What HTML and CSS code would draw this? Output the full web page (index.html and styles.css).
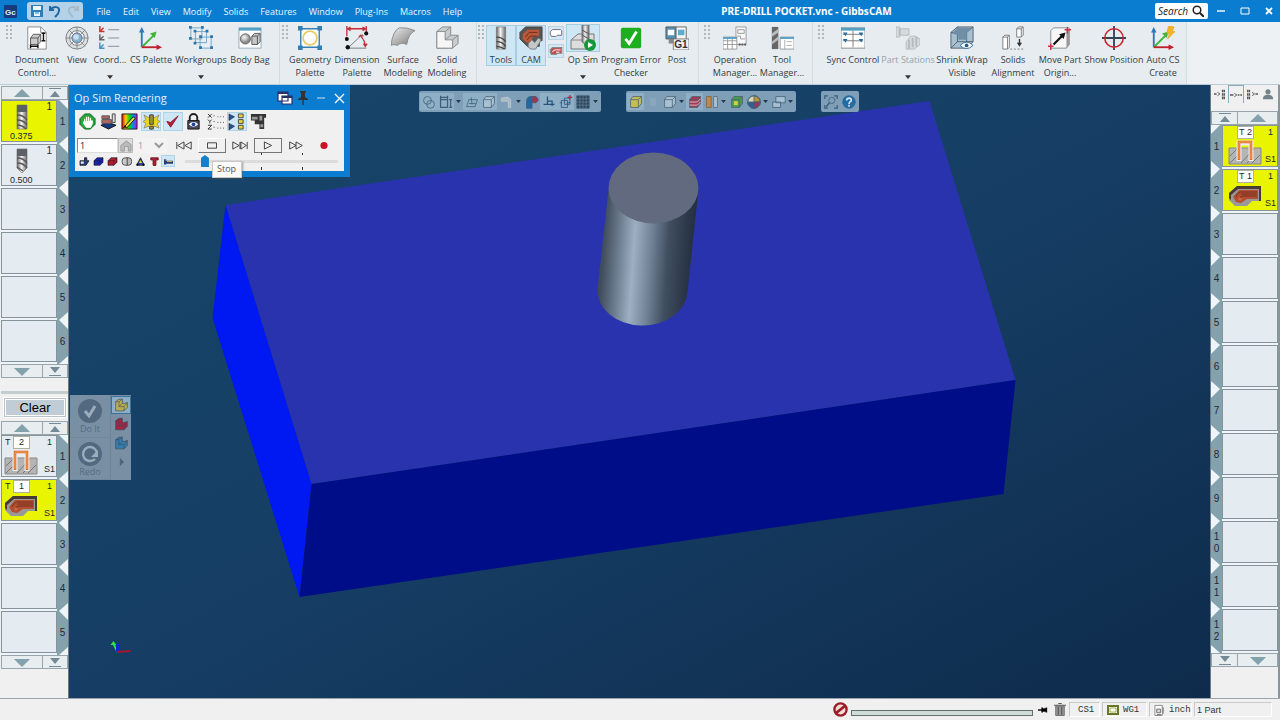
FILE: index.html
```html
<!DOCTYPE html>
<html lang="en">
<head>
<meta charset="utf-8">
<title>PRE-DRILL POCKET.vnc - GibbsCAM</title>
<link rel="stylesheet" href="styles.css">
</head>
<body>
<svg class="defs" aria-hidden="true">
  <defs>
    <linearGradient id="steel"><stop offset="0" stop-color="#666"/><stop offset=".45" stop-color="#f4f4f4"/><stop offset="1" stop-color="#666"/></linearGradient>
    <linearGradient id="grey" x2="1" y2="1"><stop offset="0" stop-color="#eee"/><stop offset="1" stop-color="#777"/></linearGradient>
    <radialGradient id="ball" cx=".4" cy=".35"><stop offset="0" stop-color="#fff"/><stop offset="1" stop-color="#888"/></radialGradient>
    <linearGradient id="rainbow"><stop offset="0" stop-color="#e00"/><stop offset=".25" stop-color="#fc0"/><stop offset=".5" stop-color="#0d0"/><stop offset=".75" stop-color="#08f"/><stop offset="1" stop-color="#d0d"/></linearGradient>
    <symbol id="mill" viewBox="0 0 12 26">
      <path d="M1 1h10v24H1z" fill="url(#steel)" stroke="#666" stroke-width=".6"/>
      <path d="M1 1h10v7H1z" fill="#5c6167"/>
      <path d="M1 11c4 0 8 2 10 5M1 16c4 0 8 2 10 5M1 21c3 0 6 1 9 4" fill="none" stroke="#555" stroke-width="1.3"/>
    </symbol>
    <symbol id="cutter" viewBox="0 0 12 26">
      <path d="M1 1h10v24H1z" fill="url(#steel)" stroke="#666" stroke-width=".6"/>
      <path d="M1 12c4 0 8 2 10 5M1 17c4 0 8 2 10 5M1 22c3 0 6 1 9 3" fill="none" stroke="#444" stroke-width="1.4"/>
    </symbol>
    <symbol id="drill" viewBox="0 0 12 26">
      <path d="M1 1h10v19l-5 5-5-5z" fill="url(#steel)" stroke="#666" stroke-width=".6"/>
      <path d="M1 1h10v7H1z" fill="#5c6167"/>
      <path d="M1 10c4 0 8 2 10 5M1 15c4 0 8 2 10 5M1 19l6 4" fill="none" stroke="#555" stroke-width="1.3"/>
    </symbol>
    <symbol id="contour" viewBox="0 0 34 26">
      <path d="M1 9h32v16H1z" fill="#b4b4b4" stroke="#888"/>
      <path d="m2 17 7-7M2 24 9 17M13 24 26 10M24 24l8-8M19 24l6-6" stroke="#777" fill="none"/>
      <path d="M11 22V4h12v18" fill="none" stroke="#eee" stroke-width="5"/>
      <path d="M11 21V3h12v18" fill="none" stroke="#e2682a" stroke-width="2.6"/>
      <path d="M11 20V3h12v17" fill="none" stroke="#f5b45b" stroke-width=".8"/>
    </symbol>
    <symbol id="pocket" viewBox="0 0 34 22">
      <path d="M9 1h24v15h-9l-5 5H7l-6-6V8z" fill="#999"/>
      <path d="M9 1h24v15h-2V4H10L3 10v5l-2-2V8z" fill="#4a3a31"/>
      <path d="M11 5h19v9H19l-6 4-5-1-3-5z" fill="#b54e30"/>
      <path d="M13 9h16M12 14a3 3 0 0 1 3-3h14M8 12q2-6 7-5h14" stroke="#72311f" fill="none"/>
      <circle cx="12" cy="14" r="1.6" fill="#d06a45"/>
    </symbol>
    <symbol id="up" viewBox="0 0 20 10"><path d="M10 0 19 9H1z"/></symbol>
    <symbol id="down" viewBox="0 0 20 10"><path d="M10 10 19 1H1z"/></symbol>
    <symbol id="top" viewBox="0 0 14 10"><path d="M1 0h12v1H1zM7 3l5 6H2z"/></symbol>
    <symbol id="bottom" viewBox="0 0 14 10"><path d="M1 9h12v1H1zM7 7l5-6H2z"/></symbol>
    <symbol id="axes" viewBox="0 0 26 26">
      <path d="M3 23V5" stroke="#2f78b7" stroke-width="2"/><path d="m0 7 3-6 3 6z" fill="#2f78b7"/>
      <path d="m3 23 14-14" stroke="#3fb53a" stroke-width="2"/><path d="m19 6-7 2 5 5z" fill="#3fb53a"/>
      <path d="M3 23h17" stroke="#c0202c" stroke-width="2"/><path d="m19 20 6 3-6 3z" fill="#c0202c"/>
    </symbol>
    <symbol id="block" viewBox="0 0 14 12"><path d="m1 5 4-4h8v6l-4 4H1z" fill="currentColor" stroke="#112" stroke-width=".8"/><path d="M1 5h8v6M9 5l4-4" fill="none" stroke="#112" stroke-width=".6"/></symbol>
    <symbol id="lsolid" viewBox="0 0 18 16"><path d="m2 4 4-3h4v5h3l3-1v6l-4 4H2z" fill="currentColor" stroke="#3c4b58" stroke-width=".8"/><path d="M2 4h4v6h6v5M6 4l4-3M6 10l4-4m2 4 4-5" fill="none" stroke="#3c4b58" stroke-width=".7"/></symbol>
    <symbol id="cube" viewBox="0 0 18 18"><path d="m2 6 3-4h11v9l-4 5H2z" fill="currentColor" stroke="#4c6171"/><path d="M2 6h10v10M12 6l4-4" fill="none" stroke="#4c6171"/></symbol>
    <symbol id="caret" viewBox="0 0 8 5"><path d="M0 0h8L4 5z"/></symbol>
    <symbol id="grip" viewBox="0 0 6 14"><path d="M0 1h2M4 1h2M0 5h2M4 5h2M0 9h2M4 9h2M0 13h2M4 13h2" stroke="#9aa5ac" stroke-width="1.4"/></symbol>
  </defs>
</svg>

<header class="titlebar">
  <div class="title-left">
    <svg class="logo" viewBox="0 0 13 13"><rect width="13" height="13" rx="1" fill="#173b7c"/><text x="1" y="10" class="logo-text">Gc</text></svg>
    <div class="quick">
      <button aria-label="Save"><svg viewBox="0 0 14 14"><path d="M1 1h12v12H1z" fill="#2980ba"/><path d="M3 2h8v4H3zM4 8h6v4H4z" fill="#eef6fa"/><path d="M5 9h4" stroke="#2980ba"/></svg></button>
      <button aria-label="Undo"><svg viewBox="0 0 14 14"><path d="M2 2v4h4M2 6c4-5 10-3 9 1-.3 3-2 4-4 6" fill="none" stroke="#2367a0" stroke-width="2"/></svg></button>
      <button aria-label="Redo"><svg viewBox="0 0 14 14"><path d="M12 2v4H8m4 0C8 1 2 3 3 7c.3 3 2 4 4 6" fill="none" stroke="#a5bac7" stroke-width="2"/></svg></button>
    </div>
    <nav class="menu">
      <button>File</button><button>Edit</button><button>View</button><button>Modify</button><button>Solids</button><button>Features</button><button>Window</button><button>Plug-Ins</button><button>Macros</button><button>Help</button>
    </nav>
  </div>
  <h1>PRE-DRILL POCKET.vnc - GibbsCAM</h1>
  <div class="title-right">
    <button class="search">Search <svg viewBox="0 0 12 12"><circle cx="5" cy="5" r="3.8" fill="none" stroke="#222" stroke-width="1.5"/><path d="m8 8 4 4" stroke="#222" stroke-width="2"/></svg></button>
    <button class="win" aria-label="Minimize"><svg viewBox="0 0 10 10"><path d="M1 5h8" stroke="#fff" stroke-width="1.4"/></svg></button>
    <button class="win" aria-label="Maximize"><svg viewBox="0 0 10 10"><path d="M1 2h8v6H1z" fill="none" stroke="#fff"/></svg></button>
    <button class="win" aria-label="Close"><svg viewBox="0 0 10 10"><path d="m2 2 6 6m0-6L2 8" stroke="#fff" stroke-width="1.8"/></svg></button>
  </div>
</header>

<section class="ribbon" aria-label="Ribbon">
  <div class="group g1">
    <svg class="grip"><use href="#grip"/></svg>
    <button class="tool w46"><svg viewBox="0 0 26 26"><path d="M3 1h14l6 6v18H3z" fill="#fff" stroke="#888"/><path d="M17 1v6h6" fill="none" stroke="#888"/><path d="m6 13 3-4h8v8l-3 3H6z" fill="#ccc" stroke="#555"/><path d="M6 13h8v7m0-7 3-4" fill="none" stroke="#555"/><path d="M20 7v9M18 8h4M18 16h4M6 22h8M6 20v4M14 20v4" stroke="#111" stroke-width="1.5"/></svg><span>Document Control...</span></button>
    <button class="tool w34"><svg viewBox="0 0 26 26"><circle cx="13" cy="13" r="12" fill="#dbe0e3" stroke="#777"/><circle cx="13" cy="13" r="8" fill="#f8fafb" stroke="#777"/><path d="M13 1v24M1 13h24M4 4l18 18M22 4 4 22" stroke="#888"/><circle cx="13" cy="13" r="5.5" fill="#82b4d0" stroke="#668"/><circle cx="12" cy="12" r="3" fill="#c9dfeb"/></svg><span>View</span></button>
    <button class="tool w32"><svg viewBox="0 0 26 26"><g fill="none" stroke-width="1.6"><path d="M2 0v6h5M2 6l4-4" stroke="#c33"/><path d="M2 9v6h5m-5 0 4-4" stroke="#666"/><path d="M2 18v6h5m-5 0 4-4" stroke="#4c93c4"/><path d="M11 4h12M11 13h12M11 22h12" stroke="#889" stroke-width="1"/></g></svg><span>Coord...</span><svg class="more"><use href="#caret"/></svg></button>
    <button class="tool w50"><svg><use href="#axes"/></svg><span>CS Palette</span></button>
    <button class="tool w50"><svg viewBox="0 0 26 26"><g fill="#e6eff5" stroke="#6fa3c6" stroke-width="1"><path d="M2 2h12v12H2zM7 6h12v12H7zM12 12h12v12H12z"/></g><g fill="#2c76aa"><path d="M0 0h3v3H0zM13 0h3v3h-3zM5 4h3v3H5zM18 4h3v3h-3zM11 10h3v3h-3zM23 10h3v3h-3zM11 22h3v3h-3zM23 22h3v3h-3zM0 12h3v3H0zM5 17h3v3H5z"/></g></svg><span>Workgroups</span><svg class="more"><use href="#caret"/></svg></button>
    <button class="tool w48"><svg viewBox="0 0 26 26"><path d="M1 2h24v22H1z" fill="#fff" stroke="#8faab9"/><path d="M1 2h24v3H1z" fill="#52a0c4"/><circle cx="8" cy="14" r="5.5" fill="url(#ball)" stroke="#666"/><path d="m15 11 3-3h6v9l-3 3h-6z" fill="#c7c7c7" stroke="#555"/><path d="M15 11h6v9m0-9 3-3" fill="none" stroke="#555"/></svg><span>Body Bag</span></button>
  </div>
  <div class="group g2">
    <svg class="grip"><use href="#grip"/></svg>
    <button class="tool w40"><svg viewBox="0 0 26 26"><path d="M3 3h20v20H3z" fill="#fff" stroke="#367eaf" stroke-width="1.5"/><circle cx="13" cy="13" r="7.5" fill="none" stroke="#eccb6a" stroke-width="2"/><path d="M0 0h5v5H0zM21 0h5v5h-5zM0 21h5v5H0zM21 21h5v5h-5z" fill="#347fb0"/></svg><span>Geometry Palette</span></button>
    <button class="tool w54"><svg viewBox="0 0 26 26"><path d="M2 0v11M23 0v6M2 3h21M6 1 3 3l3 2M19 1l3 2-3 2M17 11q5 5 5 12m-7-11 2-2 3 1m0 8 2 3 2-3" stroke="#c52a36" fill="none" stroke-width="1.4"/><path d="M3 24h20M3 24l16-15" stroke="#777" fill="none"/><g fill="#111"><circle cx="2" cy="14" r="2.2"/><circle cx="23" cy="8" r="2.2"/><circle cx="3" cy="23" r="2.4"/></g></svg><span>Dimension Palette</span></button>
    <button class="tool w38"><svg viewBox="0 0 26 26"><path d="M0 21Q2 5 9 2q8-1 17 3-7 3-9 15-6-3-10 1-4-2-7 0z" fill="url(#grey)" stroke="#888"/></svg><span>Surface Modeling</span></button>
    <button class="tool w50"><svg viewBox="0 0 26 26"><path d="m2 6 6-5h9v9h8v9l-6 5H2z" fill="#c9cccf" stroke="#888"/><path d="M2 6h9v9h8v9H2z" fill="#f6f6f6" stroke="#888"/><path d="m11 6 6-5m-6 14 6-5m2 5 6-5" stroke="#888"/></svg><span>Solid Modeling</span></button>
  </div>
  <div class="group g3">
    <svg class="grip"><use href="#grip"/></svg>
    <button class="tool w30 on"><svg><use href="#cutter"/></svg><span>Tools</span></button>
    <button class="tool w30 on"><svg viewBox="0 0 26 26"><path d="m1 7 6-6h18v15h-3v6H9l-8-8z" fill="#555" stroke="#444"/><path d="m4 9 5-5h13v6l-8 3v5H8l-4-4z" fill="#bb5738"/><path d="m7 12 4-5h9M9 15l3-4h7" stroke="#65301e" fill="none"/><path d="m10 19 4-4 3 3 4-5 3 2-6 10h-5l-3-2z" fill="#c4c7c8" stroke="#777"/></svg><span>CAM</span></button>
    <div class="pair">
      <button aria-label="Part"><svg viewBox="0 0 14 12"><path d="M4 3h7l1 1v4H8L7 9H3L2 7V5z" fill="#fff" stroke="#667" stroke-width=".8"/></svg></button>
      <button aria-label="Stock"><svg viewBox="0 0 14 12"><path d="M4 3h8v5H8L7 9H3L2 7V5z" fill="#c34b50" stroke="#888"/><path d="M4 7q0-2 3-2h4M7 7h3" stroke="#fff" stroke-width=".8" fill="none"/></svg></button>
    </div>
    <button class="tool w34 opsim"><svg viewBox="0 0 26 26"><path d="m1 15 7-6h16v8l-6 7H1z" fill="#ddd" stroke="#777"/><path d="M1 15h16v8" fill="none" stroke="#888"/><path d="M12 0h7v17l-4 2-3-2z" fill="url(#steel)" stroke="#777"/><path d="m12 5 7 4m-7 1 7 4" stroke="#555"/><circle cx="20" cy="20" r="6" fill="#16983a"/><path d="m18 17 5 3-5 3z" fill="#fff"/></svg><span>Op Sim</span><svg class="more"><use href="#caret"/></svg></button>
    <button class="tool w62"><svg viewBox="0 0 26 26"><rect x="2" y="2" width="22" height="22" rx="2" fill="#1fae20"/><path d="m7 14 4 5 8-13" stroke="#fff" stroke-width="3" fill="none"/></svg><span>Program Error Checker</span></button>
    <button class="tool w30"><svg viewBox="0 0 26 26"><path d="M1 1h11v13H1z" fill="#578fb4" stroke="#555"/><path d="M3 4h7v6H3z" fill="#fff"/><path d="M12 1h11v14H12z" fill="#f5f5f5" stroke="#666"/><path d="M14 4h7v6h-7z" fill="#5dadd0"/><path d="M4 14h6v5H4z" fill="#888"/><path d="M9 14h17v12H9z" fill="#f4f4f4" stroke="#777"/><text x="10" y="24" class="post-code">G1</text></svg><span>Post</span></button>
  </div>
  <div class="group g4">
    <svg class="grip"><use href="#grip"/></svg>
    <button class="tool w46"><svg viewBox="0 0 26 26"><path d="M14 1h11v19H14z" fill="#f8f8f8" stroke="#999"/><path d="M16 4h7v4h-7zM15 11h4v3h5" fill="none" stroke="#999"/><path d="M0 12h15v13H0z" fill="#fff" stroke="#999"/><path d="M0 16h15M0 20h15M5 13v12M10 13v12" stroke="#999"/><path d="M0 12h15v2H0z" fill="#52a0c4"/><path d="M17 20h9" stroke="#555" stroke-dasharray="2 1" stroke-width="2"/></svg><span>Operation Manager...</span></button>
    <button class="tool w48"><svg viewBox="0 0 26 26"><path d="M2 1h7v24H2z" fill="#666"/><path d="m2 8 7-5v4l-7 5zm0 9 7-6v4l-7 5z" fill="#bbb"/><path d="M11 12h15v13H11z" fill="#fff" stroke="#999"/><path d="M11 12h15v2H11z" fill="#52a0c4"/><path d="M16 15v10M18 17h6M18 21h6" stroke="#aaa"/></svg><span>Tool Manager...</span></button>
  </div>
  <div class="group g5">
    <svg class="grip"><use href="#grip"/></svg>
    <button class="tool w54"><svg viewBox="0 0 26 26"><path d="M0 2h26v22H0z" fill="#fff" stroke="#888"/><path d="M0 2h26v3H0z" fill="#52a0c4"/><path d="M13 5v18M2 9h22M2 16h22" stroke="#777"/><path d="m2 7 3 4 2-4zm17 0 3 4 2-4zM2 14l3 4 2-4zm17 0 3 4 2-4z" fill="#286b9f"/></svg><span>Sync Control</span></button>
    <button class="tool w56 faded" disabled><svg viewBox="0 0 26 26"><path d="M0 1h4v2h10v7H4v2H0zM11 17l5-6h5l5 3v6l-6 5h-9z" fill="#d7dbdd" stroke="#b3b9bc"/><path d="M4 3v7M14 15v10M18 13v10M22 12v10" stroke="#b3b9bc" stroke-width="2"/></svg><span>Part Stations</span><svg class="more"><use href="#caret"/></svg></button>
    <button class="tool w52"><svg viewBox="0 0 26 26"><path d="m1 7 7-6h17v16l-7 7H1z" fill="#a7c0d1" stroke="#53606b"/><path d="M8 1v16l-7 7M8 17h17M1 7h17v17m0-17 7-6" fill="none" stroke="#53606b"/><path d="M2 8 8 2h16l-6 5v8H9v-5z" fill="#708fa7"/><path d="M11 21q7-7 14 0-7 7-14 0" fill="#fff" stroke="#356f9b"/><circle cx="18" cy="21" r="2" fill="#235f91"/></svg><span>Shrink Wrap Visible</span></button>
    <button class="tool w50"><svg viewBox="0 0 26 26"><path d="m2 12 2-2h5v13l-2 2H2zM17 3l2-2h5v9l-2 2h-5z" fill="#fff" stroke="#777"/><path d="M2 12h5v13m0-13 2-2m8-7h5v9m0-9 2-2" stroke="#777" fill="none"/><path d="M20 14v7m-2-3 2 3 2-3" stroke="#333" fill="none" stroke-width="1.5"/><path d="M10 25h16" stroke="#777" stroke-dasharray="2 2"/></svg><span>Solids Alignment</span></button>
    <button class="tool w44"><svg viewBox="0 0 26 26"><path d="m3 5 3-3h17v18l-3 4H3z" fill="#f7f7f7" stroke="#888"/><path d="M20 5v19l3-4V3z" fill="#999"/><path d="M6 20 16 10" stroke="#111" stroke-width="2.4"/><path d="m19 7-7 2 5 5z" fill="#111"/><path d="M3 19v7m-3-4h6M21 1v7m-3-4h7" stroke="#d12c48" stroke-width="1.5"/></svg><span>Move Part Origin...</span></button>
    <button class="tool w64"><svg viewBox="0 0 26 26"><path d="M13 0v26M0 13h26" stroke="#345" stroke-width="2"/><circle cx="13" cy="13" r="10" fill="none" stroke="#cb2432" stroke-width="1.7"/></svg><span>Show Position</span></button>
    <button class="tool w34"><svg viewBox="0 0 26 26"><use href="#axes"/><path d="m19 0 6 1-2 5h3l-8 8 2-6h-3z" fill="#f3b61f" stroke="#d79a18" stroke-width=".6"/></svg><span>Auto CS Create</span></button>
  </div>
</section>

<main>
  <aside class="side left">
    <div class="arrows"><button aria-label="Scroll up"><svg class="tri"><use href="#up"/></svg></button><button aria-label="First tool"><svg class="endtri"><use href="#top"/></svg></button></div>
    <ol class="slots">
      <li class="slot"><div class="cell hot toolcell"><svg><use href="#mill"/></svg><b>1</b><span>0.375</span></div><i>1</i></li>
      <li class="slot"><div class="cell toolcell"><svg><use href="#drill"/></svg><b>1</b><span>0.500</span></div><i>2</i></li>
      <li class="slot"><div class="cell"></div><i>3</i></li>
      <li class="slot"><div class="cell"></div><i>4</i></li>
      <li class="slot"><div class="cell"></div><i>5</i></li>
      <li class="slot"><div class="cell"></div><i>6</i></li>
    </ol>
    <div class="arrows"><button aria-label="Scroll down"><svg class="tri"><use href="#down"/></svg></button><button aria-label="Last tool"><svg class="endtri"><use href="#bottom"/></svg></button></div>
    <div class="clearbox"><button class="clear">Clear</button></div>
    <div class="arrows"><button aria-label="Scroll up"><svg class="tri"><use href="#up"/></svg></button><button aria-label="First process"><svg class="endtri"><use href="#top"/></svg></button></div>
    <ol class="slots">
      <li class="slot"><div class="cell opcell"><p><span>T</span><em>2</em><b>1</b></p><p><svg><use href="#contour"/></svg><strong>S1</strong></p></div><i>1</i></li>
      <li class="slot"><div class="cell hot opcell"><p><span>T</span><em>1</em><b>1</b></p><p><svg><use href="#pocket"/></svg><strong>S1</strong></p></div><i>2</i></li>
      <li class="slot"><div class="cell"></div><i>3</i></li>
      <li class="slot"><div class="cell"></div><i>4</i></li>
      <li class="slot"><div class="cell"></div><i>5</i></li>
    </ol>
    <div class="arrows"><button aria-label="Scroll down"><svg class="tri"><use href="#down"/></svg></button><button aria-label="Last process"><svg class="endtri"><use href="#bottom"/></svg></button></div>
  </aside>

  <section class="viewport" aria-label="Part view">
    <svg class="scene" viewBox="69 85 1142 613" preserveAspectRatio="xMidYMid slice">
      <defs>
        <linearGradient id="sky" x1="0" y1="0" x2="1" y2="1"><stop offset="0" stop-color="#174669"/><stop offset=".5" stop-color="#163e65"/><stop offset="1" stop-color="#0e2b4b"/></linearGradient>
        <linearGradient id="cyl" gradientUnits="userSpaceOnUse" x1="604" y1="240" x2="694" y2="246"><stop offset="0" stop-color="#3f4c5c"/><stop offset=".12" stop-color="#5e6d7f"/><stop offset=".34" stop-color="#9dafc3"/><stop offset=".52" stop-color="#74859a"/><stop offset=".72" stop-color="#404e60"/><stop offset="1" stop-color="#242f41"/></linearGradient>
      </defs>
      <path d="M69 85h1142v613H69z" fill="url(#sky)"/>
      <path d="m226 205 704-104 86 279-704 104z" fill="#2933ae"/>
      <path d="m226 205 86 279-12 113-87-279z" fill="#0018f2"/>
      <path d="m312 484 704-104-12 114-704 103z" fill="#000d88"/>
      <path d="M609 190 598 289a45 35 0 0 0 90 3l11-103z" fill="url(#cyl)"/>
      <ellipse cx="654" cy="188" rx="45" ry="35.5" fill="#616a7f"/>
      <path d="m118 652-4-8" stroke="#2be04a" stroke-width="2"/><path d="m111 645 3-4 3 4z" fill="#2be04a"/>
      <path d="M118 652v-8" stroke="#1525c9" stroke-width="3"/><path d="m118 652 13-1" stroke="#a3162b" stroke-width="2"/>
    </svg>

    <section class="dialog" aria-label="Op Sim Rendering">
      <header><h2>Op Sim Rendering</h2>
        <button aria-label="Layers"><svg viewBox="0 0 16 16"><path d="M1 2h10v9H1zM5 6h10v8H5z" fill="#fff" stroke="#2a2f68" stroke-width="1.2"/><path d="M1 2h10v2H1zM5 6h10v2H5z" fill="#2a2f68"/></svg></button>
        <button aria-label="Pin"><svg viewBox="0 0 16 16"><path d="M5 1h6v1l-1 1v4l3 2v1H3V9l3-2V3L5 2z" fill="#333"/><path d="M8 10v5" stroke="#333" stroke-width="1.4"/></svg></button>
        <button aria-label="Minimize"><svg viewBox="0 0 16 16"><path d="M4 8h8" stroke="#c9e2f4"/></svg></button>
        <button aria-label="Close"><svg viewBox="0 0 16 16"><path d="m4 4 9 9m0-9-9 9" stroke="#fff" stroke-width="1.3"/></svg></button>
      </header>
      <div class="panel">
        <div class="row icons">
          <button aria-label="Hand"><svg viewBox="0 0 18 18"><path d="M6 1h6l5 5v6l-5 5H6l-5-5V6z" fill="#25a83b" stroke="#0c6324"/><path d="M5 9v2l3 4h4l2-4V8M6 6v6M8 4v7m2-7v7m2-6v6" fill="#fff" stroke="#fff" stroke-width="1.3"/></svg></button>
          <button aria-label="Stock"><svg viewBox="0 0 18 18"><path d="m1 13 8-3 8 3-8 4z" fill="#183880" stroke="#111"/><path d="M2 3h8v3H2zM2 7h10v4H2z" fill="#b36760" stroke="#555"/><path d="M13 1h3v9h-3z" fill="#ddd" stroke="#444"/></svg></button>
          <button aria-label="Colours"><svg viewBox="0 0 18 18"><path d="M1 1h16v16H1z" fill="url(#rainbow)" stroke="#222"/><path d="M4 14 13 4l2 2-9 10z" fill="#e7dd34" stroke="#111"/><path d="m2 16 2-3 2 2z" fill="#111"/></svg></button>
          <button class="lit" aria-label="Collision"><svg viewBox="0 0 18 18"><path d="m1 2 5 3 3-4 3 4 5-3-2 5 3 2-3 2 2 5-5-2-3 4-3-4-5 2 2-5-3-2 3-2z" fill="#e9d525" stroke="#777" stroke-width=".7"/><path d="M7 2h4v10H7zM7 14h4v3H7z" fill="#a08f2e" stroke="#333" stroke-width=".8"/></svg></button>
          <button class="lit" aria-label="Check"><svg viewBox="0 0 18 18"><path d="m3 9 4 6L15 3 7 10z" fill="#b51e37" stroke="#8e1830"/></svg></button>
          <button aria-label="Lock view"><svg viewBox="0 0 18 18"><path d="M5 8V5a4 4 0 0 1 8 0v3" fill="none" stroke="#222" stroke-width="2"/><path d="M3 8h12v9H3z" fill="#4b4d60" stroke="#111"/><path d="M4 12q5-5 10 0-5 5-10 0" fill="#fff"/><circle cx="9" cy="12" r="2" fill="#2642a3"/></svg></button>
          <button aria-label="Coordinates"><svg viewBox="0 0 18 18"><path d="m1 1 4 4m0-4L1 5M1 7l2 2 2-2M3 9v2M1 13h4l-4 4h4M7 3h1m-1 6h1m-1 6h1" stroke="#333" fill="none"/><path d="M11 4h7M11 10h7M11 16h7" stroke="#555" stroke-dasharray="1 2"/></svg></button>
          <button class="lit" aria-label="Step list"><svg viewBox="0 0 18 18"><path d="m1 1 6 3-6 4zm0 10 6 3-6 4z" fill="#25539c" stroke="#111" stroke-width=".5"/><path d="M11 1h5v4h-5zm0 6h5v4h-5zm0 6h5v4h-5z" fill="#e4d540" stroke="#444"/></svg></button>
          <button aria-label="Machine"><svg viewBox="0 0 18 18"><path d="M1 1h16v4h-2v12h-5v-5H5V8H1z" fill="#333"/><path d="M2 4h6v3H2zm8-1h3v5h-3zm1 9h3v3h-3z" fill="#999"/></svg></button>
        </div>
        <div class="row play">
          <input aria-label="Operation number" value="1">
          <button class="house" aria-label="Set start" disabled><svg viewBox="0 0 14 14"><path d="M2 13V7l6-5 5 4v7h-3V8H6v5z" fill="#bbb" stroke="#999"/></svg></button>
          <select aria-label="Part" disabled><option>1</option></select>
          <button aria-label="Rewind"><svg viewBox="0 0 18 10"><path d="M1 1v8M9 1v8L2 5zM17 1v8l-7-4z"/></svg></button>
          <button class="raised" aria-label="Stop"><svg viewBox="0 0 18 10"><path d="M4 2h10v6H4z"/></svg></button>
          <button aria-label="Step forward"><svg viewBox="0 0 18 10"><path d="M1 1v8l7-4zM9 1v8M10 1v8l6-4zM17 1v8"/></svg></button>
          <button class="pressed" aria-label="Play"><svg viewBox="0 0 18 10"><path d="m5 1 8 4-8 4z"/></svg></button>
          <button aria-label="Fast forward"><svg viewBox="0 0 18 10"><path d="m2 1 7 4-7 4zm7 0 7 4-7 4z"/></svg></button>
          <button aria-label="Record"><svg viewBox="0 0 18 10"><circle class="rec" cx="9" cy="5" r="4"/></svg></button>
        </div>
        <div class="row small">
          <button aria-label="Part display"><svg viewBox="0 0 14 12"><path d="M1 5h6V1h3v4h3l-4 6H1z" fill="#273d83" stroke="#111"/><path d="M2 6h4v3H2z" fill="#eee"/></svg></button>
          <button class="blue" aria-label="Stock display"><svg><use href="#block"/></svg></button>
          <button class="red" aria-label="Fixture display"><svg><use href="#block"/></svg></button>
          <button aria-label="Cut display"><svg viewBox="0 0 14 12"><ellipse cx="5" cy="6" rx="4" ry="5" fill="#ccc" stroke="#333"/><path d="M6 1h4a4 5 0 0 1 0 10H6M8 1v10" fill="#bbb" stroke="#333"/></svg></button>
          <button aria-label="Axes display"><svg viewBox="0 0 14 12"><path d="m7 1 5 10H2z" fill="#334aad" stroke="#111"/><path d="m7 4 2 4H5z" fill="#e6d947"/><circle cx="3" cy="10" r="1.5"/><circle cx="11" cy="10" r="1.5"/></svg></button>
          <button aria-label="Tool display"><svg viewBox="0 0 14 12"><path d="M2 1h10v3H9v7l-2 1-2-1V4H2z" fill="#a3243b" stroke="#611"/></svg></button>
          <button class="lit" aria-label="Holder display"><svg viewBox="0 0 14 12"><path d="M1 3h3v2h9v4H4v1H1z" fill="#283d75"/><path d="M2 4h1M5 6h7" stroke="#e8da48"/></svg></button>
          <input class="speed" type="range" min="0" max="100" value="11" aria-label="Speed">
        </div>
      </div>
      <div class="tooltip" role="tooltip">Stop</div>
    </section>

    <div class="float views">
      <button class="f on" aria-label="Circles"><svg viewBox="0 0 18 18"><circle cx="7" cy="7" r="5"/><circle cx="11" cy="12" r="5"/></svg></button>
      <button class="f on" aria-label="Dimensions"><svg viewBox="0 0 18 18"><path d="M2 6h9v10H2zM2 1v4m9-4v4M2 3h9M15 6v10M13 6h4m-4 10h4" stroke-width="1.6"/></svg></button>
      <svg class="fc"><use href="#caret"/></svg>
      <button class="f on" aria-label="Plane"><svg viewBox="0 0 18 18"><path d="m2 15 3-9h11l-3 9zM5 11h9M8 3l1 9"/></svg></button>
      <button class="f on pale" aria-label="Body"><svg><use href="#cube"/></svg></button>
      <button class="f" aria-label="Sheet"><svg viewBox="0 0 18 18"><path d="m3 4 9-1 3 3v10h-3V8H3z" fill="#a9b9c2" stroke="#bdcbd3"/></svg></button>
      <svg class="fc"><use href="#caret"/></svg>
      <button class="f" aria-label="Surfaces"><svg viewBox="0 0 18 18"><path d="M2 17V7q1-6 7-5h5v5H9v10z" fill="#2467a0"/><path d="M9 2h4q4 1 4 5l-3 3H9z" fill="#a33351"/></svg></button>
      <button class="f on" aria-label="Origin"><svg viewBox="0 0 18 18"><path d="M7 2v10h9M7 8h6v6M2 12h5" stroke="#24527a" stroke-width="1.6"/></svg></button>
      <button class="f on" aria-label="Add plane"><svg viewBox="0 0 18 18"><path d="M3 7h8v9H3zm4-3h7v8H7zM4 10H1m9 0h5" stroke="#24527a"/><path d="M14 0v6m-3-3h6" stroke="#a12b4c" stroke-width="1.5"/></svg></button>
      <button class="f" aria-label="Grid"><svg viewBox="0 0 18 18"><path d="M1 1h16v16H1z" fill="#27435c"/><path d="M5 1v16M9 1v16M13 1v16M1 5h16M1 9h16M1 13h16" stroke="#7d95a7" stroke-width=".7"/></svg></button>
      <svg class="fc"><use href="#caret"/></svg>
    </div>
    <div class="float render">
      <button class="f on yellow" aria-label="Shaded"><svg><use href="#cube"/></svg></button>
      <button class="f" aria-label="Hidden"><svg viewBox="0 0 18 18"><path d="M5 4h8v10H5z" fill="#8aa6bc" stroke="none"/></svg></button>
      <button class="f pale" aria-label="Wireframe"><svg><use href="#cube"/></svg></button>
      <svg class="fc"><use href="#caret"/></svg>
      <button class="f on red2" aria-label="Slices"><svg viewBox="0 0 18 18"><use href="#cube"/><path d="M2 9h10l4-4M2 13h10l4-4" stroke="#ddd"/></svg></button>
      <button class="f" aria-label="Panels"><svg viewBox="0 0 18 18"><path d="M2 2h6v14H2z" fill="#c48748" stroke="#7e6247"/><path d="M11 2h5v14h-5z" fill="#a9c0cf" stroke="#536a7c"/></svg></button>
      <svg class="fc"><use href="#caret"/></svg>
      <button class="f green" aria-label="Face"><svg viewBox="0 0 18 18"><use href="#cube"/><path d="M5 8h5v5H5z" fill="#d9ce42" stroke="none"/></svg></button>
      <button class="f" aria-label="Material"><svg viewBox="0 0 18 18"><circle cx="9" cy="9" r="8" fill="#d8d5b2"/><path d="M9 1v8h8a8 8 0 0 0-8-8z" fill="#ba9838"/><path d="M9 9h8a8 8 0 0 1-8 8z" fill="#9b3553"/><path d="M9 9v8a8 8 0 0 1-8-8z" fill="#325f91"/><circle cx="9" cy="9" r="8"/></svg></button>
      <svg class="fc"><use href="#caret"/></svg>
      <button class="f" aria-label="Windows"><svg viewBox="0 0 18 18"><path d="M5 2h12v8H5zM1 9h10v7H1z" fill="#a7c1d3"/></svg></button>
      <svg class="fc"><use href="#caret"/></svg>
    </div>
    <div class="float help">
      <button class="f" aria-label="Zoom to fit"><svg viewBox="0 0 18 18"><path d="M1 5V1h4m8 0h4v4M1 13v4h4m8 0h4v-4" stroke-width="1.6"/><circle cx="10" cy="7" r="4"/><path d="m7 10-4 5" stroke-width="2"/></svg></button>
      <button class="f" aria-label="Help"><svg viewBox="0 0 18 18"><circle cx="9" cy="9" r="8" fill="#216da7" stroke="#27618e"/><path d="M6 7q0-3 3-3t3 3q0 1-2 2-1 1-1 3" stroke="#d5e6f1" stroke-width="2"/><path d="M8 13h2v2H8z" fill="#d5e6f1" stroke="none"/></svg></button>
    </div>

    <div class="doit">
      <div class="big">
        <button><svg viewBox="0 0 24 24"><circle cx="12" cy="12" r="12" fill="#52697f"/><path d="m7 12 4 5 6-10" stroke="#99adbd" stroke-width="3" fill="none"/></svg>Do It</button>
        <button><svg viewBox="0 0 24 24"><circle cx="12" cy="12" r="12" fill="#52697f"/><path d="M17 17a7 7 0 1 1 2-6" stroke="#99adbd" stroke-width="2.4" fill="none"/><path d="M20 8v7h-7z" fill="#99adbd"/></svg>Redo</button>
      </div>
      <div class="mini">
        <button class="sel y" aria-label="Part body"><svg><use href="#lsolid"/></svg></button>
        <button class="r" aria-label="Fixture body"><svg><use href="#lsolid"/></svg></button>
        <button class="b" aria-label="Stock body"><svg><use href="#lsolid"/></svg></button>
        <button aria-label="More"><svg viewBox="0 0 18 16"><path d="m7 3 5 5-5 5z" fill="#4e6679"/></svg></button>
      </div>
    </div>
  </section>

  <aside class="side right">
    <div class="tabs">
      <button aria-label="Insert before"><svg viewBox="0 0 14 12"><path d="M0 6h3M10 1v3m0 1v3m0 1v3M12 1v3m0 1v3m0 1v3" stroke="#555" stroke-width="1.6"/><path d="m4 4 3 2-3 2" fill="none" stroke="#555"/></svg></button>
      <button class="sel" aria-label="Insert at"><svg viewBox="0 0 14 12"><path d="M0 6h4M9 6h2m1 0h2" stroke="#555" stroke-width="2"/><path d="m5 4 3 2-3 2" fill="none" stroke="#555"/></svg></button>
      <button aria-label="Insert after"><svg viewBox="0 0 14 12"><path d="M2 1v3m0 1v3m0 1v3M4 1v3m0 1v3m0 1v3M11 6h3" stroke="#555" stroke-width="1.6"/><path d="m7 4 3 2-3 2" fill="none" stroke="#555"/></svg></button>
      <button aria-label="User"><svg viewBox="0 0 14 12"><circle cx="7" cy="3.5" r="3" fill="#74828b"/><path d="M1 12q0-5 6-5t6 5z" fill="#74828b"/></svg></button>
    </div>
    <div class="arrows"><button aria-label="First operation"><svg class="endtri"><use href="#top"/></svg></button><button aria-label="Scroll up"><svg class="tri"><use href="#up"/></svg></button></div>
    <ol class="slots">
      <li class="slot"><i>1</i><div class="cell hot opcell"><p><em>T 2</em><b>1</b></p><p><svg><use href="#contour"/></svg><strong>S1</strong></p></div></li>
      <li class="slot"><i>2</i><div class="cell hot opcell"><p><em>T 1</em><b>1</b></p><p><svg><use href="#pocket"/></svg><strong>S1</strong></p></div></li>
      <li class="slot"><i>3</i><div class="cell"></div></li>
      <li class="slot"><i>4</i><div class="cell"></div></li>
      <li class="slot"><i>5</i><div class="cell"></div></li>
      <li class="slot"><i>6</i><div class="cell"></div></li>
      <li class="slot"><i>7</i><div class="cell"></div></li>
      <li class="slot"><i>8</i><div class="cell"></div></li>
      <li class="slot"><i>9</i><div class="cell"></div></li>
      <li class="slot"><i>10</i><div class="cell"></div></li>
      <li class="slot"><i>11</i><div class="cell"></div></li>
      <li class="slot"><i>12</i><div class="cell"></div></li>
    </ol>
    <div class="arrows"><button aria-label="Last operation"><svg class="endtri"><use href="#bottom"/></svg></button><button aria-label="Scroll down"><svg class="tri"><use href="#down"/></svg></button></div>
  </aside>
</main>

<footer class="status">
  <svg class="no" viewBox="0 0 16 16"><circle cx="8" cy="8" r="6.5" fill="#f4dcdc" stroke="#9b1c24" stroke-width="2.5"/><path d="M3 12 13 4" stroke="#9b1c24" stroke-width="3"/></svg>
  <div class="bar"></div>
  <svg class="pin" viewBox="0 0 12 8"><path d="M0 4h5M5 1v6M5 4h5M10 1v6" stroke="#111" stroke-width="2"/><path d="M5 2h5v4H5z"/></svg>
  <svg class="bin" viewBox="0 0 14 16"><path d="M2 4h10v11H2z" fill="#999" stroke="#666"/><path d="M0 3h14M5 1h4M5 5v9M9 5v9" stroke="#555" stroke-width="1.3"/></svg>
  <span class="field cs">CS1</span>
  <span class="field wg"><svg viewBox="0 0 12 10"><path d="M1 1h10v8H1z" fill="#fff" stroke="#66752a" stroke-width="2"/><path d="M3 3h6v4H3z" fill="#fff" stroke="#a3b04c"/></svg>WG1</span>
  <span class="field unit"><svg viewBox="0 0 12 12"><path d="M1 1h8v11H1z" fill="#fff" stroke="#888"/><path d="M3 5h4v4H3zM10 3v7M3 11h5" fill="#ddd" stroke="#444" stroke-width=".8"/></svg>inch</span>
  <span class="field part">1 Part</span>
</footer>
</body>
</html>
```
FILE: styles.css
```css
* { box-sizing: border-box; }
html, body { height: 100%; }
body {
  margin: 0;
  display: flex;
  flex-direction: column;
  overflow: hidden;
  font: 9px/13px "Open Sans", "Noto Sans", sans-serif;
  color: #333d45;
  background: #f0f0f0;
}
button, input, select { font: inherit; color: inherit; margin: 0; padding: 0; border: 0; background: none; }
h1, h2, p, ol { margin: 0; padding: 0; }
svg { display: block; flex: none; }
.defs { position: absolute; width: 0; height: 0; }

/* Title bar */
.titlebar {
  flex: none;
  height: 22px;
  display: grid;
  grid-template-columns: 1fr auto 1fr;
  align-items: center;
  background: #0b7dd1;
  color: #e9f4fc;
}
.title-left { display: flex; align-items: center; width: 0; min-width: 100%; }
.logo { width: 13px; height: 13px; margin-left: 4px; }
.logo-text { font: bold 8px "Liberation Sans", sans-serif; fill: #dff0fb; }
.quick { display: flex; gap: 4px; margin-left: 10px; padding: 2px 3px; background: #b3d1e8; border-radius: 3px; }
.quick svg { width: 14px; height: 14px; }
.menu { display: flex; gap: 12px; margin-left: 12px; white-space: nowrap; }
.menu button { min-width: 15px; }
.menu button:first-child { margin-left: 1px; }
.titlebar h1 { font: 700 10px/13px "Noto Sans", sans-serif; color: #fff; padding-left: 333px; }
.title-right { display: flex; justify-content: flex-end; align-items: center; gap: 14px; padding-right: 6px; }
.search { display: flex; align-items: center; gap: 4px; height: 16px; margin-right: -6px; padding: 0 4px 0 3px; background: #fff; border-radius: 2px; color: #222; font-style: italic; font-size: 10px; }
.search svg { width: 12px; height: 12px; }
.win svg { width: 10px; height: 10px; }

/* Ribbon */
.ribbon { flex: none; display: flex; height: 63px; background: #edf1f3; border-bottom: 1px solid #b7ccd6; }
.group { display: flex; align-items: flex-start; padding: 3px 6px 0 0; background: #e6ecef; border-right: 1px solid #d3dce1; }
.g1 { padding-left: 6px; padding-right: 5px; }
.g2 { padding-left: 2px; padding-right: 4px; }
.g3 { padding-left: 1px; }
.g4, .g5 { padding-left: 5px; }
.grip { width: 6px; height: 14px; margin-right: 2px; }
.tool { display: flex; flex-direction: column; align-items: center; text-align: center; height: 56px; flex: none; }
.tool > svg:first-child { width: 24px; height: 24px; margin: 1px 0; }
.tool span { margin: 2px -8px 0; min-height: 26px; }
.g2 .tool span { max-width: 48px; }
.more { width: 6px; height: 4px; margin-top: -4px; fill: #333; flex: none; }
.faded span { color: #99a2a8; }
.w30 { width: 30px; } .w32 { width: 32px; } .w34 { width: 34px; } .w38 { width: 38px; }
.w40 { width: 40px; } .w44 { width: 44px; } .w46 { width: 46px; } .w48 { width: 48px; }
.w50 { width: 50px; } .w52 { width: 52px; } .w54 { width: 54px; } .w56 { width: 56px; }
.w62 { width: 62px; } .w64 { width: 64px; }
.on.tool { height: 41px; background: #cfe7f5; outline: 1px solid #a7cde2; outline-offset: -1px; }
.on.tool span { min-height: 13px; }
.pair { width: 20px; display: grid; gap: 4px; padding: 1px 2px 0; }
.pair svg { width: 16px; height: 14px; background: #d4e7f2; outline: 1px solid #b9d5e4; outline-offset: -1px; }
.opsim > svg:first-child { width: 32px; height: 26px; margin: 0; background: #cfe7f5; outline: 1px solid #a7cde2; }
.post-code { font: bold 11px "Liberation Sans", sans-serif; fill: #333; }

/* Work area */
main { flex: 1; min-height: 0; display: flex; }
.side { width: 69px; flex: none; background: #f0f0f0; font: 10px/12px "Liberation Sans", sans-serif; color: #1d2a33; }
.arrows { display: flex; height: 14px; border: 1px solid #98a5ac; }
.arrows button { display: flex; justify-content: center; align-items: center; flex: 1; background: #e8edf0; }
.arrows button + button { border-left: 1px solid #98a5ac; }
.left .arrows button:first-child, .right .arrows button:last-child { flex: 0 0 40px; }
.tri { width: 18px; height: 9px; fill: #84a1ae; }
.endtri { width: 14px; height: 10px; fill: #748b97; }
.slots { list-style: none; }
.slot { display: flex; height: 44px; background: #eef4f7; }
.cell { flex: 1; min-width: 0; margin-bottom: 2px; border: 1px solid #87939a; background: #e5ecf1; }
.slot i { flex: none; width: 11px; display: flex; justify-content: center; align-items: center; text-align: center; background: #84a1ae; font-style: normal; clip-path: polygon(0 0, 2px 0, 100% 9px, 100% 36px, 2px 100%, 0 100%); }
.right .slot i { padding: 0 2px; word-break: break-all; clip-path: polygon(100% 0, 9px 0, 0 9px, 0 36px, 9px 100%, 100% 100%); }
.hot { background: #e9f500; }
.toolcell { display: grid; grid-template-columns: 38px 1fr; grid-template-rows: 30px 11px; }
.toolcell svg { width: 12px; height: 26px; margin: 3px 0 0 14px; }
.toolcell b { font-weight: 400; text-align: right; padding-right: 4px; }
.toolcell span { grid-column: 1 / -1; padding-left: 8px; line-height: 11px; font-size: 9px; }
.opcell { font-size: 9px; }
.opcell p { display: flex; }
.opcell b { font-weight: 400; margin-left: auto; padding-right: 4px; }
.opcell em { font-style: normal; background: #fff; border: 1px solid #b0b0a0; width: 17px; text-align: center; line-height: 11px; }
.opcell span { width: 11px; padding-left: 3px; }
.opcell svg { width: 34px; height: 26px; margin-left: 2px; }
.opcell strong { font-weight: 400; margin-left: auto; align-self: flex-end; padding-right: 1px; }
.right .opcell em { margin-left: 14px; }
.right .opcell svg { margin-left: 5px; }
.left { padding: 1px 0 0 1px; border-right: 1px solid #6e7a82; }
.clearbox { margin: 13px 0 0; padding: 3px 1px 3px 2px; border-top: 3px solid #c6cdd1; }
.clear { display: block; width: 100%; height: 21px; border: 3px solid #fff; outline: 1px solid #b8c3c9; outline-offset: -2px; background: #c0cdd7; color: #000; font-size: 13px; line-height: 15px; }
.right { width: 70px; border-left: 1px solid #6e7a82; border-right: 2px solid #88959c; }
.tabs { display: flex; height: 26px; padding-left: 1px; }
.tabs button { width: 16px; height: 18px; display: flex; align-items: center; justify-content: center; }
.tabs svg { width: 12px; height: 12px; }
.tabs .sel { border: 1px solid #88a9b7; border-bottom: 0; }

/* Part view */
.viewport { flex: 1; min-width: 0; position: relative; background: #163f65; overflow: hidden; }
.scene { position: absolute; inset: 0; width: 100%; height: 100%; }
.dialog { position: absolute; left: 0; top: 0; width: 281px; padding: 0 6px 6px; background: #0b7dd1; }
.dialog header { display: flex; align-items: center; height: 25px; margin: 0 -3px 0 -1px; color: #e3f1fb; gap: 2px; }
.dialog h2 { flex: 1; font-size: 11px; font-weight: 400; }
.dialog header svg { width: 16px; height: 16px; }
.panel { background: #f0f0f0; padding: 2px 2px 4px; }
.row { display: flex; align-items: center; }
.icons { justify-content: space-between; height: 19px; padding-right: 74px; }
.icons button, .small button { display: flex; align-items: center; justify-content: center; }
.icons button { width: 20px; height: 19px; }
.icons svg { width: 17px; height: 17px; }
.lit { background: #cfe7f5; outline: 1px solid #aed4e9; outline-offset: -1px; }
.play { height: 20px; margin-top: 4px; }
.play input { width: 41px; height: 15px; padding: 0 2px; background: #fff; color: #222; border: 1px solid #888; border-right-color: #ddd; border-bottom-color: #ddd; }
.play .house { width: 15px; height: 15px; background: #ddd; border: 1px solid #bbb; }
.house svg { width: 13px; height: 13px; }
.play select { width: 34px; height: 15px; padding-left: 1px; background: #f3f3f3; color: #999; margin-right: 3px; opacity: 1; }
.play button:not(.house) { width: 28px; height: 15px; display: flex; align-items: center; justify-content: center; }
.play button:not(.house) svg { width: 18px; height: 9px; fill: none; stroke: #333; stroke-width: 1; }
.play .raised { border: 1px solid #fff; border-right-color: #777; border-bottom-color: #777; }
.play .pressed { border: 1px solid #777; }
.play button:not(.house) .rec { fill: #c81424; stroke: none; }
.small { height: 12px; }
.small button { width: 14px; height: 12px; }
.small svg { width: 11px; height: 9px; }
.blue { color: #1b25a8; } .red { color: #b11e2c; }
.speed { -webkit-appearance: none; appearance: none; flex: 1; min-width: 0; height: 17px; margin: 0 4px 0 10px; background: linear-gradient(#dcdcdc, #dcdcdc) center / 100% 3px no-repeat, linear-gradient(#333, #333) 50% 100% / 1px 3px no-repeat, linear-gradient(#333, #333) 77% 100% / 1px 3px no-repeat, linear-gradient(#333, #333) 50% 0 / 1px 2px no-repeat, linear-gradient(#333, #333) 77% 0 / 1px 2px no-repeat; }
.speed::-webkit-slider-thumb { -webkit-appearance: none; width: 8px; height: 12px; background: #157fc9; clip-path: polygon(50% 0, 100% 3px, 100% 100%, 0 100%, 0 3px); }
.tooltip { position: absolute; left: 143px; top: 76px; padding: 1px 5px 2px 4px; background: #fbfbfb; border: 1px solid #c8c8c8; box-shadow: 1px 1px 2px #5558; color: #555; line-height: 12px; }
.float { position: absolute; top: 6px; display: flex; align-items: center; height: 21px; padding: 0 1px; background: #7f9eb7; border-radius: 2px; }
.views { left: 350px; } .render { left: 557px; } .help { left: 752px; }
.f { width: 17px; height: 17px; color: #a4bdcd; }
.help .f { width: 18px; }
.f svg { width: 14px; height: 14px; margin: 0 auto; fill: none; stroke: #3c6079; }
.f.on { background: #8fafc7; }
.fc { width: 5px; height: 3px; margin: 0 2px; fill: #24384a; }
.render .fc { margin: 0 2px 0 1px; }
.f.yellow { color: #c5bd58; } .f.pale { color: #a6c2d4; } .f.red2 { color: #a73851; } .f.green { color: #4b9c50; }
.doit { position: absolute; left: 1px; top: 310px; display: flex; width: 61px; height: 85px; background: #7990a4; }
.big { flex: 1; display: grid; grid-template-rows: 1fr 1fr; border-right: 1px solid #68839a; }
.big button { display: flex; flex-direction: column; align-items: center; justify-content: center; color: #526b82; border-bottom: 1px solid #6f899f; padding-top: 3px; line-height: 12px; }
.big svg { width: 24px; height: 24px; }
.mini { width: 20px; display: flex; flex-direction: column; gap: 1px; padding-top: 1px; }
.mini button { height: 18px; display: flex; align-items: center; justify-content: center; }
.mini svg { width: 15px; height: 14px; }
.mini .sel { border: 1px solid #3d7195; background: #8daec6; }
.mini .y { color: #b9ad52; } .mini .r { color: #a02445; } .mini .b { color: #367bad; }

/* Status bar */
.status { flex: none; display: flex; align-items: center; justify-content: flex-end; height: 22px; padding-right: 6px; border-top: 1px solid #9aa4aa; background: #f0f0f0; font: 9px/14px "Liberation Mono", monospace; color: #333; }
.no { width: 15px; height: 15px; margin-right: 3px; }
.bar { width: 182px; height: 6px; margin-top: 7px; border: 1px solid #61716d; background: #cfdcd7; }
.pin { width: 10px; height: 8px; margin: 0 6px 0 5px; }
.bin { width: 12px; height: 15px; margin-right: 3px; }
.field { display: flex; align-items: center; gap: 4px; height: 15px; margin-right: 2px; padding-left: 4px; border: 1px solid #c9c9c9; border-right-color: #fff; border-bottom-color: #fff; }
.cs { width: 31px; padding-left: 8px; }
.wg { width: 45px; } .unit { width: 43px; }
.wg svg { width: 12px; height: 10px; } .unit svg { width: 11px; height: 12px; }
.part { width: 78px; padding-left: 2px; font-family: "Liberation Sans", sans-serif; }
```
